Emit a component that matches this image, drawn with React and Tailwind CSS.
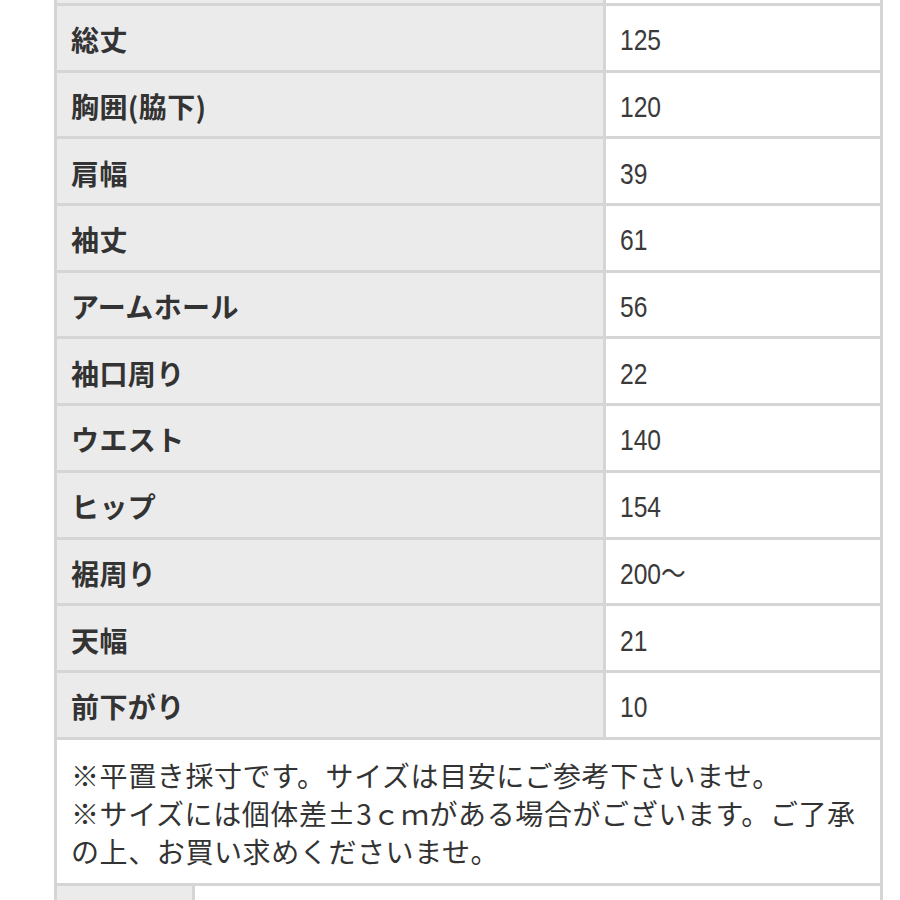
import React from 'react';

const rows = [
  ['総丈', '125'],
  ['胸囲(脇下)', '120'],
  ['肩幅', '39'],
  ['袖丈', '61'],
  ['アームホール', '56'],
  ['袖口周り', '22'],
  ['ウエスト', '140'],
  ['ヒップ', '154'],
  ['裾周り', '200〜'],
  ['天幅', '21'],
  ['前下がり', '10'],
];

const jp = { fontFamily: '"Noto Sans CJK JP", "Noto Sans", sans-serif' };

function Row({ label, value }) {
  return (
    <div className="flex h-[66.7px] border-b-[3px] border-[#d5d5d5]">
      <div className="w-[549px] bg-[#ebebeb] border-r-[3px] border-[#d5d5d5] flex items-center pl-[14px] pt-[3px]">
        <span className="text-[28px] font-bold text-[#333] tracking-[0.4px]" style={jp}>{label}</span>
      </div>
      <div className="flex-1 bg-white flex items-center pl-[14px] pt-[4px]">
        <span
          className="inline-block origin-left scale-x-[0.82] text-[30px] text-[#3a3a3a]"
          style={{ fontFamily: '"Liberation Sans", "Noto Sans CJK JP", sans-serif' }}
        >
          {value}
        </span>
      </div>
    </div>
  );
}

export default function App() {
  return (
    <div className="w-[900px] h-[900px] overflow-hidden bg-white">
      <div className="ml-[54px] w-[829px] border-x-[3px] border-[#d5d5d5]">
        <div className="flex h-[6px] border-b-[3px] border-[#d5d5d5]">
          <div className="w-[549px] bg-[#ebebeb] border-r-[3px] border-[#d5d5d5]" />
          <div className="flex-1 bg-white" />
        </div>
        {rows.map(([l, v]) => (
          <Row key={l} label={l} value={v} />
        ))}
        <div className="border-b-[3px] border-[#d5d5d5] bg-white pt-[16px] pb-[13px] pl-[14px] pr-[4px]">
          <p className="text-[28px] leading-[38px] text-[#333] tracking-[0.6px] whitespace-nowrap" style={jp}>
            ※平置き採寸です。サイズは目安にご参考下さいませ。
            <br />
            ※サイズには個体差±3ｃｍがある場合がございます。ご了承
            <br />
            の上、お買い求めくださいませ。
          </p>
        </div>
        <div className="flex h-[40px]">
          <div className="w-[138px] bg-[#ebebeb] border-r-[3px] border-[#d5d5d5]" />
          <div className="flex-1 bg-white" />
        </div>
      </div>
    </div>
  );
}
